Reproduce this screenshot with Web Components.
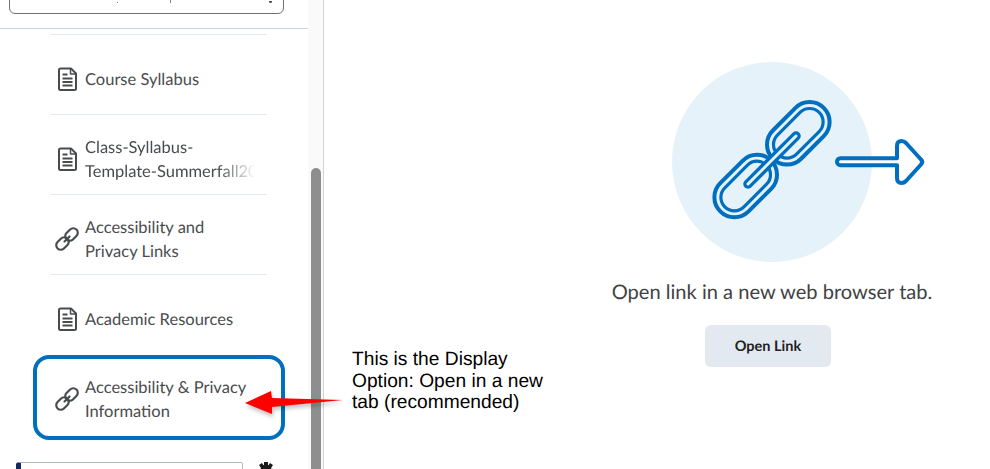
<!DOCTYPE html>
<html lang="en">
<head>
<meta charset="utf-8">
<title>Open in a new tab</title>
<style>
    html, body { margin: 0; height: 100%; overflow: hidden; background: #fff; }
    body { font-family: Lato, "Open Sans", sans-serif; color: #494c4e; text-rendering: geometricPrecision; }
</style>
</head>
<body>
<lesson-page>
    <side-panel slot="side">
        <nav-item icon="doc">Course Syllabus</nav-item>
        <nav-item icon="doc" fade>Class-Syllabus-<br>Template-Summerfall2021</nav-item>
        <nav-item icon="link">Accessibility and<br>Privacy Links</nav-item>
        <nav-item icon="doc">Academic Resources</nav-item>
        <nav-item icon="link" focused>Accessibility &amp; Privacy<br>Information</nav-item>
    </side-panel>
    <open-link-panel slot="main"></open-link-panel>
    <callout-note slot="overlay">This is the Display Option: Open in a new tab (recommended)</callout-note>
</lesson-page>

<script>
const ICONS = {
    doc: `<svg width="24" height="24" viewBox="0 0 24 24" fill="none" stroke="#494c4e" stroke-width="2" stroke-linejoin="round">
            <path d="M5.5 1.5H16L21 6.5V21.5Q21 23 19.500 23H5.500Q4 23 4 21.500V3Q4 1.500 5.500 1.500Z"/>
            <path d="M15.500 2V7H21" stroke-width="1.500"/>
            <path d="M7.500 7.500H12.500M7.500 11.500H17.500M7.500 15H17.500M7.500 18.500H17.500" stroke-width="2"/>
        </svg>`,
    link: `<svg width="24" height="24" viewBox="0 0 24 24" fill="none" stroke="#494c4e" stroke-width="2.200">
            <rect x="-7" y="-4.500" width="14" height="9" rx="4.500" transform="translate(7.500 16.500) rotate(-45)"/>
            <rect x="-7" y="-4.500" width="14" height="9" rx="4.500" transform="translate(16.500 7.500) rotate(-45)"/>
            <path d="M9.500 14.500L14.500 9.500" stroke-linecap="round"/>
        </svg>`
};

class LessonPage extends HTMLElement {
    connectedCallback() {
        this.attachShadow({ mode: 'open' });
        this.shadowRoot.innerHTML = `
            <style>
                :host {
                    display: flex;
                    position: relative;
                    width: 990px;
                    height: 469px;
                    overflow: hidden;
                }
            </style>
            <slot name="side"></slot>
            <slot name="main"></slot>
            <slot name="overlay"></slot>
        `;
    }
}

class SidePanel extends HTMLElement {
    connectedCallback() {
        this.attachShadow({ mode: 'open' });
        this.shadowRoot.innerHTML = `
            <style>
                :host {
                    display: flex;
                    flex: 0 0 324px;
                    height: 469px;
                    overflow: hidden;
                }
                .nav {
                    flex: 0 0 308px;
                    width: 308px;
                    min-width: 0;
                    display: flex;
                    flex-direction: column;
                }
                .head {
                    flex: none;
                    height: 29px;
                    display: flex;
                    align-items: flex-end;
                    box-sizing: border-box;
                    padding: 0 24px 14px 9px;
                    border-bottom: 1px solid #cdd5dc;
                    overflow: hidden;
                }
                .select {
                    position: relative;
                    flex: 1;
                    height: 40px;
                    flex-shrink: 0;
                    box-sizing: border-box;
                    border: 1px solid #6e7376;
                    border-radius: 6px;
                    background: #fff;
                }
                .select i {
                    position: absolute;
                    bottom: 10px;
                    width: 1px;
                    height: 3px;
                    background: #7a8a96;
                }
                .select i:nth-child(1) { left: 107px; height: 1px; }
                .select i:nth-child(2) { left: 160px; }
                .select i:nth-child(3) { left: 259px; width: 3px; height: 2px; border-radius: 0 0 2px 2px; background: #494c4e; }
                .list {
                    margin: 5px 41px 0 51px;
                }
                .foot {
                    display: flex;
                    align-items: flex-start;
                    gap: 15px;
                    margin: 22px 0 0 16px;
                }
                .box {
                    width: 227px;
                    height: 40px;
                    flex: none;
                    box-sizing: border-box;
                    border: 1px solid #b1b8bd;
                    border-left: 5px solid #14295f;
                    border-radius: 3px 2px 0 0;
                    background: #fff;
                }
                .track {
                    flex: 0 0 16px;
                    border-right: 1px solid #cdd5dc;
                    background: #fafafa;
                    padding: 168px 0 0 3px;
                    box-sizing: border-box;
                }
                .thumb {
                    width: 10px;
                    height: 320px;
                    border-radius: 5px 5px 0 0;
                    background: #8e8e8e;
                }
            </style>
            <div class="nav">
                <div class="head">
                    <div class="select"><i></i><i></i><i></i></div>
                </div>
                <div class="list"><slot></slot></div>
                <div class="foot">
                    <div class="box"></div>
                    <svg width="16" height="16" viewBox="0 0 16 16" fill="#1a1a1a">
                        <circle cx="8" cy="8" r="5.500"/>
                        <path d="M6 0H10V4H6ZM1 3L4 1L6 4L3 6ZM15 3L12 1L10 4L13 6Z"/>
                    </svg>
                </div>
            </div>
            <div class="track"><div class="thumb"></div></div>
        `;
    }
}

class NavItem extends HTMLElement {
    connectedCallback() {
        const icon = ICONS[this.getAttribute('icon')] || '';
        this.attachShadow({ mode: 'open' });
        this.shadowRoot.innerHTML = `
            <style>
                :host {
                    display: flex;
                    align-items: center;
                    gap: 6px;
                    box-sizing: border-box;
                    height: 80px;
                    padding: 9px 0 0 4px;
                    border-top: 1px solid #e3e9f1;
                    font: 400 16.500px/24px Lato, "Open Sans", sans-serif;
                    color: #494c4e;
                }
                :host([focused]) {
                    height: 85px;
                    width: 252px;
                    margin: 1px 0 0 -18px;
                    padding: 3px 0 0 18px;
                    border: 4px solid #006fbf;
                    border-radius: 16px;
                }
                svg { flex: none; display: block; }
                .text { white-space: nowrap; }
                :host([fade]) .text {
                    width: 170px;
                    overflow: hidden;
                    -webkit-mask-image: linear-gradient(90deg, #000 78%, transparent 100%);
                    mask-image: linear-gradient(90deg, #000 78%, transparent 100%);
                }
            </style>
            ${icon}
            <div class="text"><slot></slot></div>
        `;
    }
}

class OpenLinkPanel extends HTMLElement {
    connectedCallback() {
        this.attachShadow({ mode: 'open' });
        this.shadowRoot.innerHTML = `
            <style>
                :host {
                    flex: 1;
                    display: flex;
                    flex-direction: column;
                    align-items: center;
                    box-sizing: border-box;
                    padding: 62px 0 0 230px;
                }
                svg { display: block; overflow: visible; }
                p {
                    margin: 17px 0 0;
                    font: 400 20.100px/26px Lato, "Open Sans", sans-serif;
                    color: #3f4244;
                    white-space: nowrap;
                }
                button {
                    margin: 20px 8px 0 0;
                    width: 126px;
                    height: 42px;
                    padding: 0;
                    border: 0;
                    border-radius: 6px;
                    background: #e3e9f1;
                    color: #202122;
                    font: 700 14.500px Lato, "Open Sans", sans-serif;
                    text-rendering: geometricPrecision;
                }
            </style>
            <svg width="200" height="200" viewBox="0 0 200 200" fill="none" stroke="#006fbf">
                <circle cx="100" cy="100" r="100" fill="#e6f2f9" stroke="none"/>
                <g stroke-width="4">
                    <rect x="-36" y="-20" width="72" height="40" rx="20" transform="translate(73.700 124) rotate(-45)"/>
                    <rect x="-36" y="-20" width="72" height="40" rx="20" transform="translate(126.300 71.300) rotate(-45)"/>
                </g>
                <g stroke-width="3.200">
                    <rect x="-29.500" y="-13.500" width="59" height="27" rx="13.500" transform="translate(73.700 124) rotate(-45)"/>
                    <rect x="-29.500" y="-13.500" width="59" height="27" rx="13.500" transform="translate(126.300 71.300) rotate(-45)"/>
                </g>
                <path d="M76 122L124 74" stroke-width="9.500" stroke-linecap="round"/>
                <path d="M76 122L124 74" stroke="#e6f2f9" stroke-width="3" stroke-linecap="round"/>
                <path d="M225 96.200V84Q225 79 229.500 79Q232 79 234 81L249 97.500Q251.500 100 249 102.500L234 119Q232 121 229.500 121Q225 121 225 116V103.200H168.500A3.500 3.500 0 0 1 168.500 96.200Z" fill="#fff" stroke-width="4" stroke-linejoin="round"/>
            </svg>
            <p>Open link in a new web browser tab.</p>
            <button type="button">Open Link</button>
        `;
    }
}

// annotation added on top of the screenshot, so it sits on the page and not in the flow
class CalloutNote extends HTMLElement {
    connectedCallback() {
        this.attachShadow({ mode: 'open' });
        this.shadowRoot.innerHTML = `
            <style>
                :host { position: absolute; inset: 0; display: block; pointer-events: none; }
                .note {
                    position: absolute;
                    left: 352px;
                    top: 349px;
                    width: 200px;
                    font: 400 19.200px/21.500px "Liberation Sans", Arial, sans-serif;
                    color: #000;
                }
                svg {
                    position: absolute;
                    left: 0;
                    top: 0;
                    filter: drop-shadow(1px 3px 2px rgba(0, 0, 0, .25));
                }
            </style>
            <svg width="990" height="469" viewBox="0 0 990 469">
                <polygon points="245,403 271,391 272,398 343,400 272,407 272,414" fill="#f00"/>
            </svg>
            <div class="note"><slot></slot></div>
        `;
    }
}

customElements.define('lesson-page', LessonPage);
customElements.define('side-panel', SidePanel);
customElements.define('nav-item', NavItem);
customElements.define('open-link-panel', OpenLinkPanel);
customElements.define('callout-note', CalloutNote);
</script>
</body>
</html>
